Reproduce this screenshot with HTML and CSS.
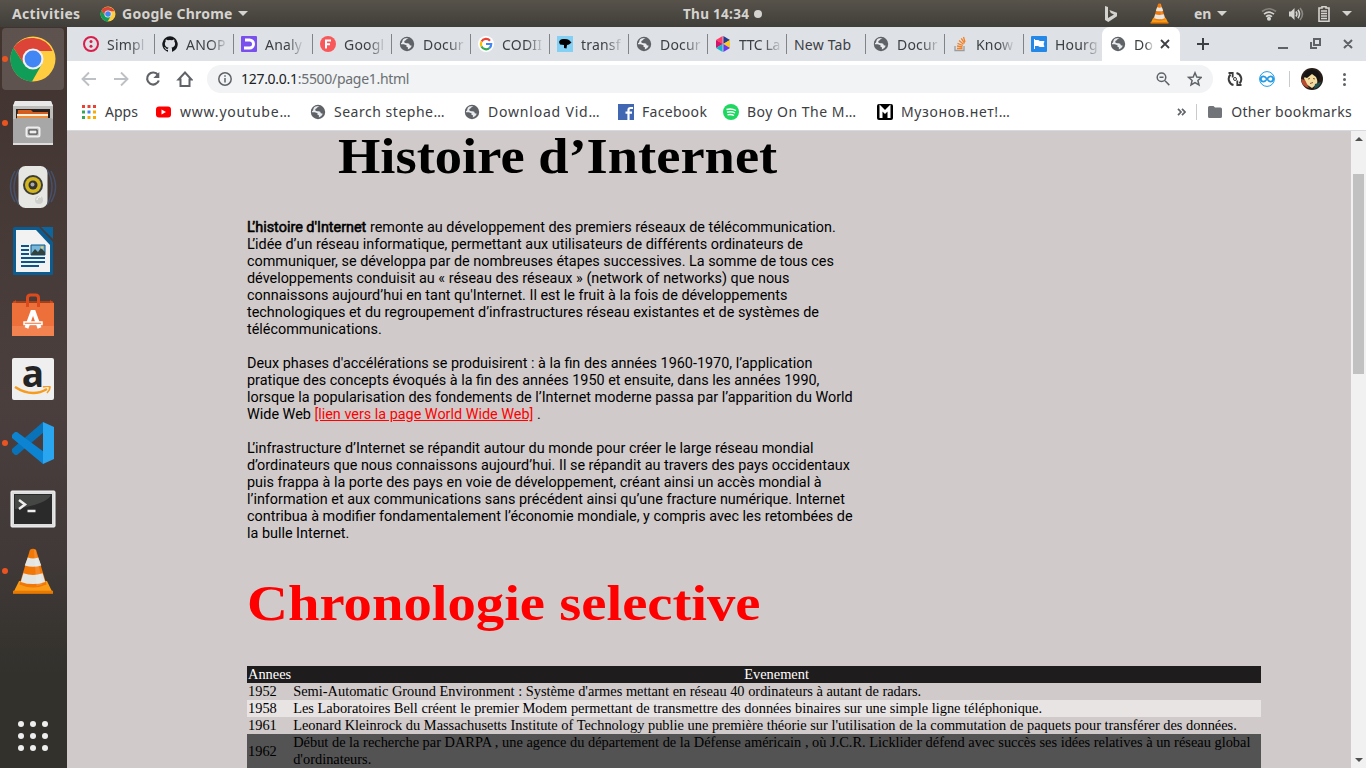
FILE: index.html
```html
<!DOCTYPE html>
<html lang="fr">
<head>
<meta charset="utf-8">
<title>Histoire d'Internet</title>
<link rel="stylesheet" href="styles.css">
</head>
<body>
<svg class="defs" width="0" height="0">
  <defs>
    <symbol id="globe" viewBox="0 0 16 16"><circle cx="8" cy="8" r="7.200" fill="#5f6368"/><path d="M9.600 2.300Q7.500 2.500 7 4 4.800 4.700 5.200 6.300 6 7.500 8.500 7.200 10.800 7.400 10.800 9.300L12.800 9.800Q11.800 12.600 8.800 13.600L9 11.400 7.300 10.600 7.600 9.200 4.800 8.300 1.900 8.200Q1.800 3.800 5.500 2.600 8 1.600 9.600 2.300z" fill="#e9ebee"/><path d="M1 8q0-4.500 4-6L3.500 4.500 3 6.500z" fill="#5f6368"/></symbol>
    <symbol id="chrome" viewBox="0 0 48 48"><circle cx="24" cy="24" r="22.5" fill="#ffcd40"/><path d="M4.500 12.700A22.500 22.500 0 0 0 23 46.500L33 29 24 24 15 29z" fill="#0f9d58"/><path d="M4.500 12.700A22.500 22.500 0 0 1 43.500 16H24v8l-9 5z" fill="#db4437"/><circle cx="24" cy="24" r="10.5" fill="#f1f1f1"/><circle cx="24" cy="24" r="8.400" fill="#4285f4"/></symbol>
    <symbol id="cone" viewBox="0 0 48 54"><path d="M8 38h32l7 14H1z" fill="#f99b16"/><path d="M1 49h46v3.500H1z" fill="#e87800"/><path d="M20.500 2q3.500-2 7 0l12 40q-15.500 7-31 0z" fill="#f17707"/><path d="M18 11q6 2 12 0l3.500 9q-9.500 3-19 0zM13 29q11 4 22 0l3 10q-14 5-28 0z" fill="#e3e5e3"/><path d="M25 2l3 42 7-2-8-40z" fill="#fff" opacity=".15"/></symbol>
  </defs>
</svg>
<div class="desktop">
  <header class="topbar">
    <span class="t-activities">Activities</span>
    <svg class="t-chrome" width="16" height="16"><use href="#chrome"/></svg>
    <span class="t-app">Google Chrome</span>
    <i class="caret"></i>
    <span class="t-clock">Thu 14:34</span><i class="t-dot"></i>
    <svg class="t-bing" width="14" height="16" viewBox="0 0 14 16"><path d="M1 0l3 1v11l6-3.500-3.200-1.500L5.400 4 13 6.800v3.400L4.300 16 1 14z" fill="#d5d3cf"/></svg>
    <svg class="t-cone" width="19" height="21"><use href="#cone"/></svg>
    <span class="t-lang">en</span><i class="caret"></i>
    <svg class="t-wifi" width="16" height="14" viewBox="0 0 16 14" fill="none" stroke="#d5d3cf" stroke-width="1.700"><path d="M1 4.500q7-5.500 14 0" opacity=".4"/><path d="M3 7.200q5-4 10 0M5 9.700q3-2.400 6 0"/><circle cx="8" cy="11.800" r="1.200" fill="#d5d3cf"/></svg>
    <svg class="t-sound" width="16" height="14" viewBox="0 0 16 14" fill="none" stroke="#d5d3cf" stroke-width="1.600"><path d="M1 4.500h2L6.500 1v12L3 9.500H1z" fill="#d5d3cf" stroke="none"/><path d="M8 4.500q1.700 2.500 0 5M10 2.700q3 4.300 0 8.600"/><path d="M12 1q5 6 0 12" opacity=".45"/></svg>
    <svg class="t-battery" width="12" height="16" viewBox="0 0 12 16" fill="none" stroke="#d5d3cf" stroke-width="1.600"><path d="M4 2V.8h4V2h3v13.200H1V2zM3 5h6M3 7.500h6M3 10h6M3 12.500h6"/></svg>
    <i class="caret t-last"></i>
  </header>
  <div class="work">
    <nav class="dock">
      <div class="launcher active running"><svg width="48" height="48"><use href="#chrome"/></svg></div>
      <div class="launcher running"><svg width="44" height="46" viewBox="0 0 44 46"><path d="M4 1h36l2 5v38H2V6z" fill="#bdbdbc"/><path d="M4 1h36l2 5H2z" fill="#e8e8e8"/><path d="M5 9h34v12H5z" fill="#27221f"/><path d="M7 10h13l2 2h15v8H6z" fill="#d35d1e"/><path d="M6 14h31v2H6z" fill="#fff0dc"/><path d="M6 16h31v3H6z" fill="#f08b38"/><path d="M2 19h2l2-1h34l2 1v25H2z" fill="#a7a7a7"/><path d="M2 43h40v2H2z" fill="#ddd"/><rect x="15.500" y="27.500" width="13" height="9" rx="1.500" fill="#a7a7a7" stroke="#eee" stroke-width="2"/><path d="M18 30h8v4h-8z" fill="#eee" stroke="#444"/></svg></div>
      <div class="launcher"><svg width="48" height="46" viewBox="0 0 48 46"><path d="M6 7q-9 16 0 31M10 5Q0 23 10 41M42 7q9 16 0 31M38 5q10 18 0 36" fill="none" stroke="#46506a" stroke-width="1.500"/><rect x="9.500" y="2" width="29" height="42" rx="7" fill="#e6e6e3"/><circle cx="24" cy="21" r="10" fill="#3c3c39"/><circle cx="24" cy="21" r="8" fill="#d3b51e"/><circle cx="24" cy="21" r="4.500" fill="#333"/><circle cx="23.500" cy="20.500" r="2" fill="#aaa"/><circle cx="30" cy="36" r="4" fill="#cfcfcc"/><path d="M28 36a3 3 0 0 1 4-3" stroke="#fff" fill="none"/></svg></div>
      <div class="launcher"><svg width="42" height="48" viewBox="0 0 42 48"><path d="M3 0h24l14 15v32q0 1-1 1H2q-1 0-1-1V2q0-2 2-2z" fill="#0b5c91"/><path d="M29 0h12v12z" fill="#0c659c"/><path d="M4 3h20l14 15v27H4z" fill="#f2f2f2"/><path d="M9 19h8M9 23h8M9 27h8M9 31h24M9 35h24M9 39h18" stroke="#0a568a" stroke-width="1.800"/><path d="M19 18h14v10H19z" fill="#75b8dc" stroke="#0a568a"/><path d="M19 27l4-5 3 3 3-4 4 4v3H19z" fill="#33423e"/><circle cx="30" cy="20.500" r="1.200" fill="#f9cb46"/></svg></div>
      <div class="launcher"><svg width="44" height="46" viewBox="0 0 44 46"><path d="M2 9h40v8H2z" fill="#a83e16"/><path d="M1 11h42v33H1z" fill="#ed703a"/><path d="M1 11l4-3v3M43 11l-4-3v3" fill="#c74a1e"/><path d="M16.500 15V6q0-3 3-3h5q3 0 3 3v9" fill="none" stroke="#dd4b1d" stroke-width="3"/><path d="M1 34h42v10H1z" fill="#f28250"/><path d="M15.500 36l5.800-16h1.500l5.700 16" fill="none" stroke="#fff" stroke-width="4"/><path d="M13 30h18v2.500H13z" fill="#ed703a" stroke="#fff" stroke-width="1.500"/></svg></div>
      <div class="launcher"><div class="amazon"><span>a</span><svg width="38" height="10" viewBox="0 0 38 10"><path d="M1 1q17 11 32 2" fill="none" stroke="#f79b1c" stroke-width="2.500"/><path d="M29 1q5-1.500 7 0 0 3-3 6" fill="none" stroke="#f79b1c" stroke-width="1.700"/></svg></div></div>
      <div class="launcher running"><svg width="44" height="44" viewBox="0 0 44 44"><path d="M1 31v-3L32 1l1 10L6 34H4z" fill="#0873b9"/><path d="M1 14v3l31 26 1-12L6 11H4z" fill="#0c84d2"/><path d="M32 1l11 5v32l-11 5z" fill="#2aa5f0"/></svg></div>
      <div class="launcher term"><svg width="46" height="40" viewBox="0 0 46 40"><rect x="1" y="1" width="44" height="36" rx="1" fill="#dedede" stroke="#f5f5f5"/><path d="M4 4h38v30H4z" fill="#292a29"/><path d="M5 5h36q-4 9-36 14z" fill="#454745"/><path d="M9 10l6 4.500L9 19M17.500 21h8" fill="none" stroke="#eee" stroke-width="2.500"/></svg></div>
      <div class="launcher running"><svg width="42" height="47"><use href="#cone"/></svg></div>
      <div class="show-apps"><i></i><i></i><i></i><i></i><i></i><i></i><i></i><i></i><i></i></div>
    </nav>
    <section class="browser">
      <div class="tabs">
        <div class="tab"><svg viewBox="0 0 16 16"><circle cx="8" cy="8" r="7" fill="none" stroke="#d91e4b" stroke-width="2"/><circle cx="8" cy="5.500" r="1.500" fill="#d91e4b"/><circle cx="8" cy="10.300" r="1.500" fill="#d91e4b"/></svg><span>Simpl</span></div>
        <div class="tab"><svg viewBox="0 0 16 16"><path d="M8 .2a8 8 0 0 0-2.500 15.500c.4.100.5-.1.500-.4v-1.500c-2.200.5-2.700-1-2.700-1-.3-.9-.9-1.200-.9-1.200-.7-.5.100-.5.100-.5.800.1 1.200.9 1.200.9.700 1.200 1.900.9 2.300.7.100-.6.300-.9.500-1.100-1.800-.2-3.600-.9-3.600-4 0-.9.300-1.600.8-2.100-.1-.2-.4-1 .1-2.100 0 0 .7-.2 2.200.8a7 7 0 0 1 4 0c1.500-1 2.200-.8 2.200-.8.400 1.100.1 1.900.1 2.100.5.500.8 1.200.8 2.100 0 3.100-1.900 3.800-3.700 4 .3.300.6.700.6 1.500v2.200c0 .3.100.5.500.4A8 8 0 0 0 8 .2z" fill="#15171a"/></svg><span>ANOP</span></div>
        <div class="tab"><svg viewBox="0 0 16 16"><rect width="16" height="16" rx="1" fill="#7950ed"/><path d="M4 4h4.500a4 4 0 0 1 0 8H3" fill="none" stroke="#fff" stroke-width="3"/></svg><span>Analy</span></div>
        <div class="tab"><svg viewBox="0 0 16 16"><circle cx="8" cy="8" r="8" fill="#f85859"/><path d="M6 12.500V4.500h5M6 8.200h4" fill="none" stroke="#fff" stroke-width="2"/></svg><span>Googl</span></div>
        <div class="tab"><svg><use href="#globe"/></svg><span>Docur</span></div>
        <div class="tab"><svg viewBox="0 0 16 16"><circle cx="8" cy="8" r="8" fill="#fff"/><g fill="none" stroke-width="2.200"><path d="M12 4.700A5.200 5.200 0 0 0 3.500 5.500" stroke="#ea4335"/><path d="M3.500 5.500a5.200 5.200 0 0 0 0 5" stroke="#fbbc05"/><path d="M3.500 10.500A5.200 5.200 0 0 0 11.500 12" stroke="#34a853"/><path d="M11.500 12A5.200 5.200 0 0 0 13.200 8H8" stroke="#4285f4"/></g></svg><span>CODII</span></div>
        <div class="tab"><svg viewBox="0 0 16 16"><path d="M0 0h16v16H0z" fill="#82d0f3"/><path d="M2 6q1-3 4-3 4-.5 6 1l2.500 2.500L12 8.500 10 9l-.5 3.500L7 12V9L3 8.500z"/></svg><span>transf</span></div>
        <div class="tab"><svg><use href="#globe"/></svg><span>Docur</span></div>
        <div class="tab"><svg viewBox="0 0 16 16"><path d="M7.600 0v8L1 4z" fill="#ff3c66"/><path d="M8.400 0v8L15 4z" fill="#243b90"/><path d="M1 4v8l7-4z" fill="#d5126b"/><path d="M15 4v8L8 8z" fill="#f9ca24"/><path d="M1 12l6.600-4v8z" fill="#16b5c9"/><path d="M15 12L8.400 8v8z" fill="#6b35ed"/></svg><span class="tight">TTC La</span></div>
        <div class="tab plain"><span>New Tab</span></div>
        <div class="tab"><svg><use href="#globe"/></svg><span>Docur</span></div>
        <div class="tab"><svg viewBox="0 0 16 16" fill="none"><path d="M3 10v4.500h9V10" stroke="#9a9da0" stroke-width="1.300"/><path d="M5 12.500h5.500M5 10l5.500 1M5.500 7.300l5.300 2.200M7 4.500l4.500 3.700M9.300 2.300l3.300 5M11.500 1l1.500 5" stroke="#f48024" stroke-width="1.300"/></svg><span>Know</span></div>
        <div class="tab last"><svg viewBox="0 0 16 16"><rect width="16" height="16" rx="1" fill="#2488e8"/><path d="M3.500 3v10M4 4.500h3l2 1h4L12 8l1 2.500H9l-2-1H4z" fill="#fff" stroke="#fff"/></svg><span>Hourg</span></div>
        <div class="tab current"><svg><use href="#globe"/></svg><span>Do</span><svg class="close" viewBox="0 0 10 10"><path d="M1 1l8 8M9 1L1 9" stroke="#3c4043" stroke-width="1.800"/></svg></div>
        <svg class="newtab" viewBox="0 0 12 12"><path d="M6 0v12M0 6h12" stroke="#3c4043" stroke-width="2"/></svg>
        <svg class="win" viewBox="0 0 76 12" fill="none" stroke="#5f6368" stroke-width="2"><path d="M0 10h10M36 1h6v6h-6zM33 4v6h6M66 2l8 8M74 2l-8 8"/></svg>
      </div>
      <div class="toolbar">
        <svg class="nav-icons" width="112" height="20" viewBox="0 0 112 20" fill="none" stroke-width="1.900"><path d="M15 10H2M8 3.500L1.500 10 8 16.500M33 10h13M40 3.500l6.500 6.500-6.500 6.500" stroke="#bdc1c6"/><path d="M77 6a6 6 0 1 0 .8 5.500" stroke="#5f6368" stroke-width="2.200"/><path d="M78.300 3v6h-6z" fill="#5f6368"/><path d="M97.500 10.500h2V17h9v-6.500h2L104 3.500z" stroke="#5f6368" stroke-width="2"/></svg>
        <div class="omnibox">
          <svg width="14" height="14" viewBox="0 0 14 14" fill="none" stroke="#5f6368" stroke-width="1.500"><circle cx="7" cy="7" r="6.200"/><path d="M7 6v4.500M7 3.300v1.500"/></svg>
          <span class="url"><b>127.0.0.1</b>:5500/page1.html</span>
          <svg class="right" width="46" height="16" viewBox="0 0 46 16" fill="none" stroke="#5f6368" stroke-width="1.500"><circle cx="5.500" cy="6.300" r="4.300"/><path d="M9 9.800l4.300 4.300M3.500 6.300h4"/><path d="M39 1.800l1.800 4.200 4.600.4-3.500 3 1.100 4.500-4-2.400-4 2.400 1.100-4.500-3.500-3 4.600-.4z"/></svg>
        </div>
        <svg class="ext" width="48" height="16" viewBox="0 0 48 16" fill="none"><path d="M6.500 14A6.300 6.300 0 0 1 3.500 3.500M9.500 2a6.300 6.300 0 0 1 3 10.500" stroke="#3c3c3c" stroke-width="2"/><path d="M1.500 2h4.200v4.500M14.500 14h-4.200V9.500" stroke="#3c3c3c" stroke-width="1.800"/><circle cx="8" cy="8" r="1.500" stroke="#3c3c3c"/><circle cx="40" cy="8" r="7.400" stroke="#249be4"/><path d="M40 8c-1.500-2-2.500-2.700-3.500-2.700a2.700 2.700 0 0 0 0 5.400c1 0 2-.7 3.500-2.700s2.500-2.700 3.500-2.700a2.700 2.700 0 0 1 0 5.400C42.500 10.700 41.500 10 40 8z" stroke="#249be4" stroke-width="1.800"/></svg>
        <i class="rule"></i>
        <svg class="avatar" width="22" height="22" viewBox="0 0 22 22"><circle cx="11" cy="11" r="11" fill="#251c17"/><path d="M3 10q3-5 9-5l5 4-1 7-5 4-6-4z" fill="#f3dc9f"/><path d="M3 9q0-7 8-7 7 0 8 7l-2 5-2-5-4-3-5 4z" fill="#151313"/><path d="M0 11l4 1 4 8q-7-1-8-9z" fill="#b64d31"/><path d="M14 16l6-2q-1 5-7 7z" fill="#215451"/><path d="M7 11l2-.5M12 10.500l2 .5M9 15.500l3-1" stroke="#8c5635"/></svg>
        <div class="menu"><i></i><i></i><i></i></div>
      </div>
      <div class="bookmarks">
        <div class="bm"><svg viewBox="0 0 16 16"><path d="M1 1h3v3H1zM6.500 1h3v3h-3zM12 1h3v3h-3z" fill="#e94235"/><path d="M1 6.500h3v3H1z" fill="#34a853"/><path d="M6.500 6.500h3v3h-3z" fill="#4285f4"/><path d="M12 6.500h3v3h-3zM12 12h3v3h-3zM6.500 12h3v3h-3z" fill="#f9ab00"/><path d="M1 12h3v3H1z" fill="#34a853"/></svg><span>Apps</span></div>
        <div class="bm"><svg viewBox="0 0 16 16"><rect x="0" y="2.500" width="15" height="11" rx="3" fill="#f00"/><path d="M5.500 5.500v5L10 8z" fill="#fff"/></svg><span class="l-yt">www.youtube…</span></div>
        <div class="bm"><svg><use href="#globe"/></svg><span class="l-se">Search stephe…</span></div>
        <div class="bm"><svg><use href="#globe"/></svg><span class="l-dl">Download Vid…</span></div>
        <div class="bm"><svg viewBox="0 0 16 16"><path d="M0 0h16v16H0z" fill="#4267b2"/><path d="M10.500 16V6q0-2 2-2H15M7.500 8.700h6.500" fill="none" stroke="#fff" stroke-width="2.200"/></svg><span class="l-fb">Facebook</span></div>
        <div class="bm"><svg viewBox="0 0 16 16"><circle cx="8" cy="8" r="8" fill="#1ed760"/><path d="M3.500 5.500q5-1.500 9.500 1M4 8.200q4.500-1.200 8 .8M4.500 10.800q3.500-1 6.500.7" fill="none" stroke="#fff" stroke-width="1.400"/></svg><span class="l-boy">Boy On The M…</span></div>
        <div class="bm"><svg viewBox="0 0 16 16"><rect width="16" height="16" rx="2"/><path d="M4 14V4l4 4 4-4v10" fill="none" stroke="#fff" stroke-width="3"/></svg><span class="l-mz">Музонов.нет!…</span></div>
        <div class="bm-end"><svg width="9" height="8" viewBox="0 0 9 8" fill="none" stroke="#5f6368" stroke-width="1.700"><path d="M1 .8L4 4 1 7.200M5 .8L8 4 5 7.200"/></svg><i class="rule"></i><svg width="14" height="12" viewBox="0 0 14 12"><path d="M0 1.500Q0 0 1.500 0h4L7 1.500h5.500Q14 1.500 14 3v7.500q0 1.500-1.500 1.500h-11Q0 12 0 10.500z" fill="#717479"/></svg><span>Other bookmarks</span></div>
      </div>
      <div class="viewport">
        <main class="page">
          <h1><span>Histoire d’Internet</span></h1>
          <p><strong><span class="kern">L</span>’histoire d'Internet</strong> remonte au développement des premiers réseaux de télécommunication.<br><span class="kern">L</span>’idée d’un réseau informatique, permettant aux utilisateurs de différents ordinateurs de<br>communiquer, se développa par de nombreuses étapes successives. La somme de tous ces<br>développements conduisit au « réseau des réseaux » (network of networks) que nous<br>connaissons aujourd’hui en tant qu'Internet. Il est le fruit à la fois de développements<br>technologiques et du regroupement d’infrastructures réseau existantes et de systèmes de<br>télécommunications.</p>
          <p>Deux phases d'accélérations se produisirent : à la fin des années 1960-1970, l’application<br>pratique des concepts évoqués à la fin des années 1950 et ensuite, dans les années 1990,<br>lorsque la popularisation des fondements de l’Internet moderne passa par l’apparition du World<br>Wide Web <a href="#">[lien vers la page World Wide Web]</a> .</p>
          <p><span class="kern">L</span>’infrastructure d’Internet se répandit autour du monde pour créer le large réseau mondial<br>d’ordinateurs que nous connaissons aujourd’hui. Il se répandit au travers des pays occidentaux<br>puis frappa à la porte des pays en voie de développement, créant ainsi un accès mondial à<br>l’information et aux communications sans précédent ainsi qu’une fracture numérique. Internet<br>contribua à modifier fondamentalement l’économie mondiale, y compris avec les retombées de<br>la bulle Internet.</p>
          <h2><span>Chronologie selective</span></h2>
          <table>
            <tr class="head"><th>Annees</th><th>Evenement</th></tr>
            <tr><td>1952</td><td>Semi-Automatic Ground Environment : Système d'armes mettant en réseau 40 ordinateurs à autant de radars.</td></tr>
            <tr class="light"><td>1958</td><td>Les Laboratoires Bell créent le premier Modem permettant de transmettre des données binaires sur une simple ligne téléphonique.</td></tr>
            <tr><td>1961</td><td>Leonard Kleinrock du Massachusetts Institute of Technology publie une première théorie sur l'utilisation de la commutation de paquets pour transférer des données.</td></tr>
            <tr class="dark"><td>1962</td><td>Début de la recherche par DARPA , une agence du département de la Défense américain , où J.C.R. Licklider défend avec succès ses idées relatives à un réseau global<br>d'ordinateurs.</td></tr>
          </table>
        </main>
        <div class="scrollbar"><i class="up"></i><div class="thumb"></div><i class="down"></i></div>
      </div>
    </section>
  </div>
</div>
</body>
</html>
```
FILE: styles.css
```css
* { box-sizing: border-box; }
body { margin: 0; overflow: hidden; font-family: "Noto Sans", "Open Sans", sans-serif; }
svg { display: block; flex: none; }
.defs { position: absolute; }
.desktop { width: 1366px; height: 768px; display: flex; flex-direction: column; overflow: hidden; }

/* system bar */
.topbar { height: 27px; flex: none; display: flex; align-items: center; background: linear-gradient(#57534b, #403e39); color: #d5d3cf; font-size: 14px; font-weight: bold; white-space: nowrap; }
.caret { flex: none; border: 5px solid transparent; border-top: 5px solid #d5d3cf; border-bottom: 0; }
.t-activities { width: 89px; padding-left: 12px; letter-spacing: .35px; }
.t-chrome { margin-left: 11px; }
.t-app { width: 111px; margin: 0 5px 0 6px; letter-spacing: .25px; }
.t-clock { width: 67px; margin-left: 435px; font-size: 13.5px; letter-spacing: .3px; }
.t-dot { width: 8px; height: 8px; margin-left: 4px; border-radius: 50%; background: #d5d3cf; }
.t-bing { margin-left: 342px; }
.t-cone { margin-left: 32px; }
.t-lang { width: 18px; margin: 0 5px 0 25px; }
.t-wifi { margin-left: 34px; }
.t-sound { margin-left: 11px; }
.t-battery { margin-left: 14px; }
.t-last { margin-left: 12px; }

.work { flex: 1; display: flex; min-height: 0; }

/* dock */
.dock { width: 67px; flex: none; display: flex; flex-direction: column; align-items: center; background: linear-gradient(#41342f, #4b3f3e 50%, #403937 72%, #32312c 88%); }
.launcher { width: 67px; height: 64px; flex: none; padding-right: 1px; display: flex; align-items: center; justify-content: center; position: relative; }
.launcher.term { padding-top: 5px; }
.launcher.active::after { content: ""; position: absolute; inset: 1px 3px 1px 2px; border-radius: 4px; background: #ffffff26; }
.launcher svg { position: relative; z-index: 1; }
.launcher.running::before { content: ""; position: absolute; z-index: 2; left: 2px; top: 29px; width: 6px; height: 6px; border-radius: 50%; background: #e95420; }
.amazon { width: 42px; height: 42px; background: #efefef; border-radius: 2px; display: flex; flex-direction: column; align-items: center; }
.amazon span { height: 28px; font: bold 37px/29px "Open Sans", sans-serif; color: #242424; }
.show-apps { margin: auto 2px 17px 0; display: grid; grid-template-columns: repeat(3, 6px); gap: 6px; }
.show-apps i { width: 6px; height: 6px; border-radius: 50%; background: #eee; }

/* browser chrome */
.browser { flex: 1; display: flex; flex-direction: column; min-width: 0; background: #fff; color: #3c4043; font-size: 14px; }
.tabs { height: 34px; flex: none; padding-left: 9px; display: flex; align-items: center; background: #dee1e6; }
.tab { width: 79px; height: 20px; flex: none; padding-left: 7px; display: flex; align-items: center; gap: 8px; border-right: 1px solid #808489; }
.tab svg { width: 16px; height: 16px; }
.tab span { white-space: nowrap; letter-spacing: .2px; mask-image: linear-gradient(90deg, #000 60%, #0002); }
.tab .tight { letter-spacing: -.4px; }
.tab.plain span { width: 64px; mask-image: none; }
.tab.last { border: 0; }
.tab.current { width: 78px; height: 34px; margin-left: -1px; padding-left: 8px; background: #fff; border-radius: 8px 8px 0 0; border: 0; }
.tab.current span { width: 19px; }
.tab .close { width: 10px; height: 10px; margin-left: -1px; }
.newtab { width: 12px; height: 12px; margin-left: 17px; }
.win { width: 76px; height: 12px; margin-left: 69px; }

.toolbar { height: 36px; flex: none; padding-left: 14px; display: flex; align-items: center; }
.omnibox { width: 1006px; height: 28px; margin-left: 14px; padding: 0 11px; border-radius: 14px; background: #f1f3f4; display: flex; align-items: center; }
.url { margin-left: 9px; padding-bottom: 1px; color: #6b6f73; white-space: nowrap; letter-spacing: -.29px; }
.url b { color: #202124; font-weight: normal; }
.right { margin-left: auto; }
.ext { margin-left: 14px; }
.rule { width: 1px; height: 16px; background: #c8cacd; }
.toolbar .rule { margin-left: 14px; }
.avatar { margin-left: 11px; }
.menu { margin-left: 20px; display: grid; gap: 2px; }
.menu i { width: 3px; height: 3px; border-radius: 50%; background: #5f6368; }

.bookmarks { height: 34px; flex: none; padding: 0 14px 4px; display: grid; grid-template-columns: 75px 154px 154px 154px 105px 154px 154px 1fr; align-items: center; border-bottom: 1px solid #d6d9dd; white-space: nowrap; }
.bm { display: flex; align-items: center; gap: 8px; }
.bm svg { width: 16px; height: 16px; }
.l-yt, .l-dl { letter-spacing: .8px; }
.l-se { letter-spacing: .52px; }
.l-fb { letter-spacing: .3px; }
.l-boy { letter-spacing: .5px; }
.l-mz { letter-spacing: .65px; }
.bm-end { display: flex; align-items: center; justify-content: flex-end; }
.bm-end .rule { margin: 0 11px 0 10px; }
.bm-end span { margin-left: 9px; letter-spacing: .33px; }

/* page */
.viewport { flex: 1; display: flex; min-height: 0; overflow: hidden; background: #d0caca; color: #000; }
.page { flex: 1; padding-left: 180px; white-space: nowrap; }
h1, h2 { margin: 0; font: bold 51px/60px "Liberation Serif", serif; }
h1 span, h2 span { display: inline-block; transform-origin: left; }
h1 span { transform: scaleX(1.068); }
h2 span { transform: scaleX(1.111); }
h1 { padding-left: 91px; margin: -5px 0 33px; }
h2 { color: red; margin: 31px 0 33px; }
p { margin: 0 0 17px; font: 14.4px/17px Roboto, sans-serif; }
.kern { letter-spacing: -2.6px; }
strong { font-weight: normal; -webkit-text-stroke: .55px #000; }
a { color: red; }
table { width: 1014px; border-collapse: collapse; font: 14.4px/17px "Liberation Serif", serif; }
th, td { padding: 0 1px; text-align: left; }
th { font-weight: normal; }
th:first-child, td:first-child { width: 45px; }
th:last-child { text-align: center; }
.head { background: #1f1c1d; color: #fff; }
.light { background: #e9e4e4; }
.dark { background: #535353; }
.scrollbar { width: 15px; display: flex; flex-direction: column; align-items: center; background: #f1f1f1; }
.thumb { width: 11px; height: 200px; background: #c1c1c1; }
.up { margin: 6px 0 33px; border: 4px solid transparent; border-top: 0; border-bottom: 4px solid #505050; }
.down { margin: auto 0 6px; border: 4px solid transparent; border-bottom: 0; border-top: 4px solid #505050; }
```
